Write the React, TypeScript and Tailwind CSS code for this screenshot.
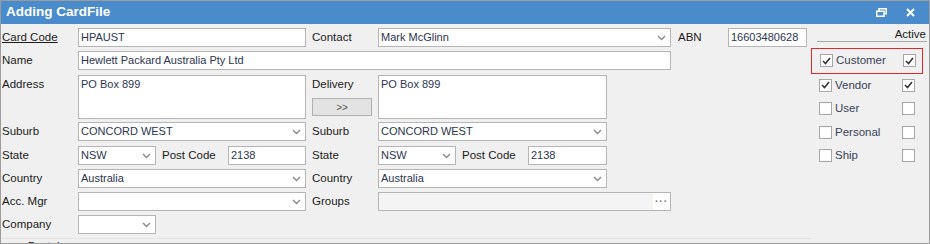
import React from "react";

const font = { fontFamily: '"Liberation Sans", Arial, sans-serif' };

function Label({ w, children }: { w: number; children: React.ReactNode }) {
  return (
    <div className="shrink-0 text-[11.5px] leading-[19px] text-[#1b1b1b]" style={{ width: w }}>
      {children}
    </div>
  );
}

function Chevron() {
  return (
    <svg width="9" height="6" viewBox="0 0 9 6" className="shrink-0">
      <path d="M1 1l3.5 3.5L8 1" fill="none" stroke="#8a8a8a" strokeWidth="1.4" />
    </svg>
  );
}

function TextBox({ w, value }: { w: number; value?: string }) {
  return (
    <div
      className="flex h-[19px] shrink-0 items-center border border-[#b5b5b5] bg-white pl-[2px] text-[11px] text-[#2c3550]"
      style={{ width: w }}
    >
      {value}
    </div>
  );
}

function Combo({ w, value }: { w: number; value?: string }) {
  return (
    <div
      className="flex h-[19px] shrink-0 items-center justify-between border border-[#b5b5b5] bg-white pl-[2px] pr-[4px] text-[11px] text-[#2c3550]"
      style={{ width: w }}
    >
      <span>{value}</span>
      <Chevron />
    </div>
  );
}

function Check({ on }: { on?: boolean }) {
  return (
    <div className="flex h-[13px] w-[13px] shrink-0 items-center justify-center border border-[#a6a6a6] bg-white">
      {on && (
        <svg width="9" height="8" viewBox="0 0 9 8">
          <path d="M1 4l2.5 2.5L8 1" fill="none" stroke="#333" strokeWidth="1.6" />
        </svg>
      )}
    </div>
  );
}

function FlagRow({ label, on, active }: { label: string; on?: boolean; active?: boolean }) {
  return (
    <div className="flex h-[23.5px] items-center pl-[8px]">
      <Check on={on} />
      <span className="ml-[3px] w-[67px] text-[11.5px] text-[#3a4258]">{label}</span>
      <Check on={active} />
    </div>
  );
}

export default function App() {
  return (
    <div className="h-[244px] w-[930px] overflow-hidden border border-[#9c9c9c] bg-[#f0f0f0]" style={font}>
      <div className="flex h-[23px] items-center justify-between bg-[#4a8ccb] pl-[5px] pr-[14px]">
        <span className="text-[13.5px] font-bold text-white">Adding CardFile</span>
        <div className="flex items-center gap-[19px]">
          <svg width="11" height="9" viewBox="0 0 11 9">
            <rect x="3" y="0.75" width="7.25" height="5" fill="none" stroke="white" strokeWidth="1.5" />
            <rect x="0.75" y="3.25" width="7.25" height="5" fill="#4a8ccb" stroke="white" strokeWidth="1.5" />
          </svg>
          <svg width="9" height="9" viewBox="0 0 9 9">
            <path d="M1 1l7 7M8 1L1 8" stroke="white" strokeWidth="2" />
          </svg>
        </div>
      </div>

      <div className="flex">
        <div className="flex w-[810px] flex-col pl-[1px] pt-[4px]">
          <div className="flex items-center">
            <Label w={76}><span className="underline">Card Code</span></Label>
            <TextBox w={228} value="HPAUST" />
            <div className="w-[6px]" />
            <Label w={66}>Contact</Label>
            <Combo w={293} value="Mark McGlinn" />
            <div className="w-[7px]" />
            <Label w={50}>ABN</Label>
            <TextBox w={79} value="16603480628" />
          </div>

          <div className="mt-[4px] flex items-center">
            <Label w={76}>Name</Label>
            <TextBox w={593} value="Hewlett Packard Australia Pty Ltd" />
          </div>

          <div className="mt-[5px] flex items-start">
            <Label w={76}>Address</Label>
            <div className="h-[44px] w-[228px] shrink-0 border border-[#b5b5b5] bg-white pl-[2px] text-[11px] leading-[17px] text-[#2c3550]">
              PO Box 899
            </div>
            <div className="w-[6px]" />
            <div className="flex w-[66px] shrink-0 flex-col">
              <Label w={66}>Delivery</Label>
              <div className="mt-[4px] flex h-[18px] w-[60px] items-center justify-center border border-[#b0b0b0] bg-[#e3e3e3] text-[10px] text-[#555]">
                &gt;&gt;
              </div>
            </div>
            <div className="h-[44px] w-[229px] shrink-0 border border-[#b5b5b5] bg-white pl-[2px] text-[11px] leading-[17px] text-[#2c3550]">
              PO Box 899
            </div>
          </div>

          <div className="mt-[3px] flex items-center">
            <Label w={76}>Suburb</Label>
            <Combo w={228} value="CONCORD WEST" />
            <div className="w-[6px]" />
            <Label w={66}>Suburb</Label>
            <Combo w={229} value="CONCORD WEST" />
          </div>

          <div className="mt-[5px] flex items-center">
            <Label w={76}>State</Label>
            <Combo w={78} value="NSW" />
            <div className="w-[6px]" />
            <Label w={66}>Post Code</Label>
            <TextBox w={78} value="2138" />
            <div className="w-[6px]" />
            <Label w={66}>State</Label>
            <Combo w={78} value="NSW" />
            <div className="w-[6px]" />
            <Label w={66}>Post Code</Label>
            <TextBox w={79} value="2138" />
          </div>

          <div className="mt-[4px] flex items-center">
            <Label w={76}>Country</Label>
            <Combo w={228} value="Australia" />
            <div className="w-[6px]" />
            <Label w={66}>Country</Label>
            <Combo w={229} value="Australia" />
          </div>

          <div className="mt-[4px] flex items-center">
            <Label w={76}>Acc. Mgr</Label>
            <Combo w={228} />
            <div className="w-[6px]" />
            <Label w={66}>Groups</Label>
            <div className="flex h-[19px] w-[293px] shrink-0 items-stretch justify-end border border-[#b5b5b5] bg-[#f4f4f4]">
              <div className="flex w-[17px] items-center justify-center bg-white text-[10px] font-bold leading-none tracking-[1px] text-[#777]">
                ···
              </div>
            </div>
          </div>

          <div className="mt-[4px] flex items-center">
            <Label w={76}>Company</Label>
            <Combo w={78} />
          </div>

          <div className="-ml-[1px] mt-[4px] border-t border-[#e4e4e4] pl-[12px] text-[11.5px] leading-[14px] text-[#1b1b1b]">
            — Postal
          </div>
        </div>

        <div className="flex w-[116px] flex-col pt-[4px]">
          <div className="ml-[6px] border-b border-[#a8a8a8] pb-[1px] pr-[1px] text-right text-[11.5px] leading-[12px] text-[#1b1b1b]">
            Active
          </div>
          <div className="mt-[6px] w-[112px] border border-[#e0272b]">
            <FlagRow label="Customer" on active />
          </div>
          <FlagRow label="Vendor" on active />
          <FlagRow label="User" />
          <FlagRow label="Personal" />
          <FlagRow label="Ship" />
        </div>
      </div>
    </div>
  );
}
